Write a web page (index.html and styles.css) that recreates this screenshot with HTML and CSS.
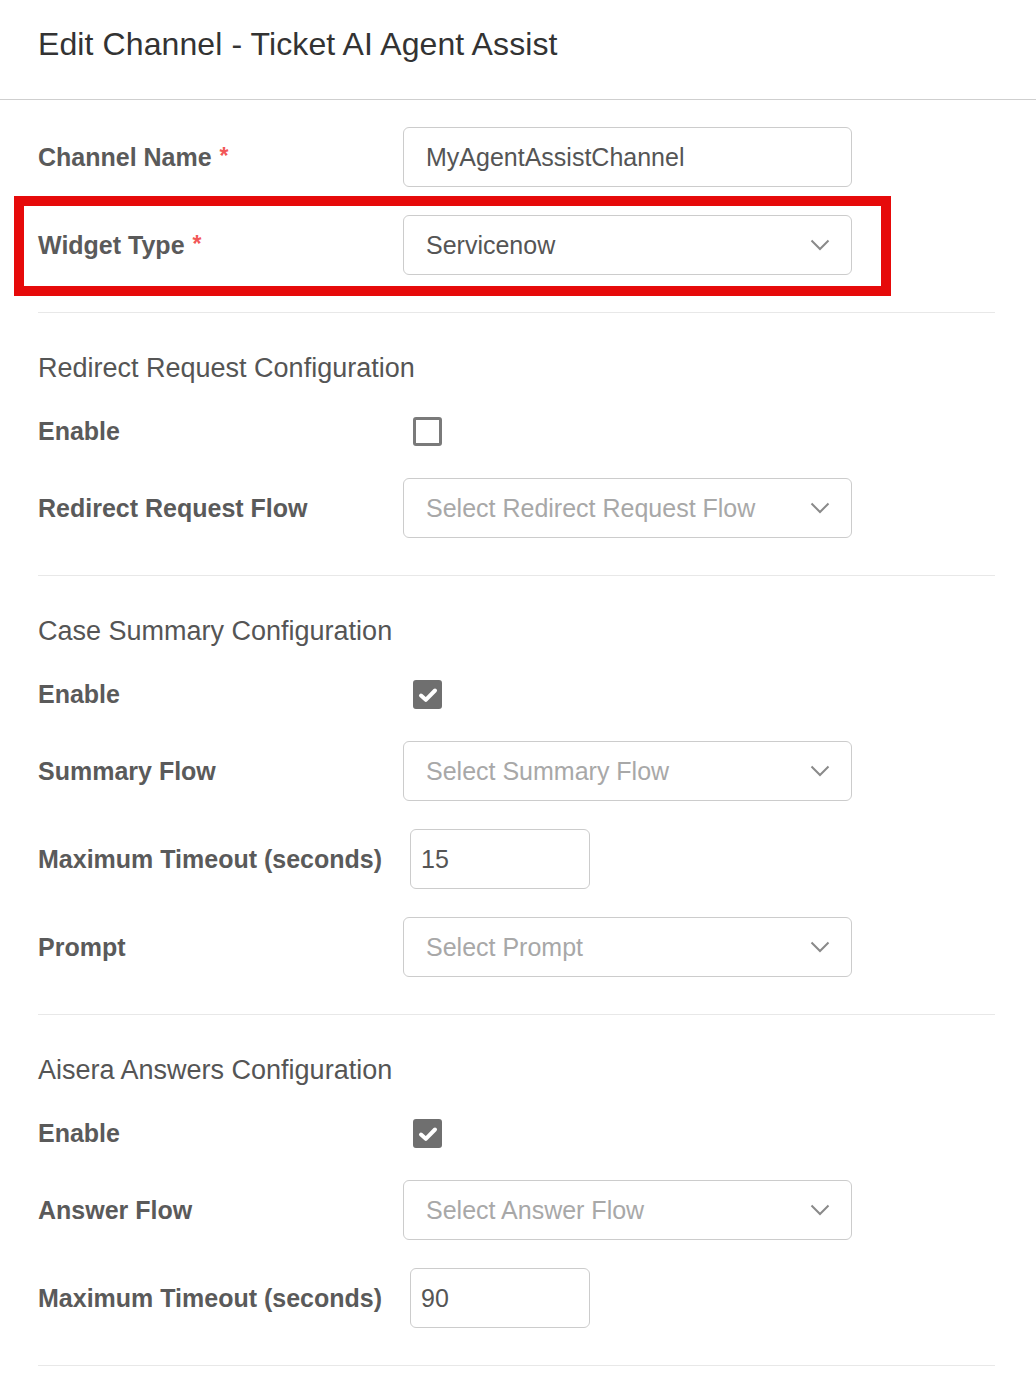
FILE: index.html
```html
<!DOCTYPE html>
<html lang="en">
<head>
<meta charset="utf-8">
<title>Edit Channel - Ticket AI Agent Assist</title>
<link rel="stylesheet" href="styles.css">
</head>
<body>
<header class="page-header">
  <h1 class="page-title">Edit Channel - Ticket AI Agent Assist</h1>
</header>
<main class="form">
  <section class="section section-first">
    <div class="row">
      <label class="label">Channel Name <span class="req">*</span></label>
      <div class="field">MyAgentAssistChannel</div>
    </div>
    <div class="row row-highlight">
      <label class="label">Widget Type <span class="req">*</span></label>
      <div class="field select">
        <span>Servicenow</span>
        <svg class="chev" width="20" height="12" viewBox="0 0 20 12"><path d="M1.5 1.5 L10 10 L18.5 1.5" fill="none" stroke="#8a8a8a" stroke-width="2"/></svg>
      </div>
      <div class="highlight"></div>
    </div>
  </section>

  <section class="section">
    <h2 class="section-title">Redirect Request Configuration</h2>
    <div class="row row-check">
      <label class="label">Enable</label>
      <span class="checkbox"></span>
    </div>
    <div class="row">
      <label class="label">Redirect Request Flow</label>
      <div class="field select placeholder">
        <span>Select Redirect Request Flow</span>
        <svg class="chev" width="20" height="12" viewBox="0 0 20 12"><path d="M1.5 1.5 L10 10 L18.5 1.5" fill="none" stroke="#8a8a8a" stroke-width="2"/></svg>
      </div>
    </div>
  </section>

  <section class="section">
    <h2 class="section-title">Case Summary Configuration</h2>
    <div class="row row-check">
      <label class="label">Enable</label>
      <span class="checkbox checked"><svg width="20" height="16" viewBox="0 0 20 16"><path d="M3 8.5 L7.8 12.8 L17 3.5" fill="none" stroke="#fff" stroke-width="4" stroke-linecap="round" stroke-linejoin="round"/></svg></span>
    </div>
    <div class="row">
      <label class="label">Summary Flow</label>
      <div class="field select placeholder">
        <span>Select Summary Flow</span>
        <svg class="chev" width="20" height="12" viewBox="0 0 20 12"><path d="M1.5 1.5 L10 10 L18.5 1.5" fill="none" stroke="#8a8a8a" stroke-width="2"/></svg>
      </div>
    </div>
    <div class="row">
      <label class="label">Maximum Timeout (seconds)</label>
      <div class="field number">15</div>
    </div>
    <div class="row">
      <label class="label">Prompt</label>
      <div class="field select placeholder">
        <span>Select Prompt</span>
        <svg class="chev" width="20" height="12" viewBox="0 0 20 12"><path d="M1.5 1.5 L10 10 L18.5 1.5" fill="none" stroke="#8a8a8a" stroke-width="2"/></svg>
      </div>
    </div>
  </section>

  <section class="section">
    <h2 class="section-title">Aisera Answers Configuration</h2>
    <div class="row row-check">
      <label class="label">Enable</label>
      <span class="checkbox checked"><svg width="20" height="16" viewBox="0 0 20 16"><path d="M3 8.5 L7.8 12.8 L17 3.5" fill="none" stroke="#fff" stroke-width="4" stroke-linecap="round" stroke-linejoin="round"/></svg></span>
    </div>
    <div class="row">
      <label class="label">Answer Flow</label>
      <div class="field select placeholder">
        <span>Select Answer Flow</span>
        <svg class="chev" width="20" height="12" viewBox="0 0 20 12"><path d="M1.5 1.5 L10 10 L18.5 1.5" fill="none" stroke="#8a8a8a" stroke-width="2"/></svg>
      </div>
    </div>
    <div class="row">
      <label class="label">Maximum Timeout (seconds)</label>
      <div class="field number">90</div>
    </div>
  </section>
</main>
</body>
</html>
```

FILE: styles.css
```css
* { box-sizing: border-box; }

html, body {
  margin: 0;
  padding: 0;
  background: #fff;
  font-family: "Liberation Sans", Arial, Helvetica, sans-serif;
  color: #555;
}

.page-header {
  height: 100px;
  border-bottom: 1px solid #cfcfcf;
  padding: 26px 38px 0;
}

.page-title {
  margin: 0;
  font-size: 32px;
  line-height: 36px;
  font-weight: 400;
  color: #333;
  letter-spacing: 0.1px;
}

.form {
  padding: 0 41px 0 38px;
}

.section {
  padding: 37px 0;
  border-bottom: 1px solid #e8e8e8;
  display: flex;
  flex-direction: column;
  gap: 28px;
}

.section-first {
  padding-top: 27px;
}

.section-title {
  margin: 0 0 -1px;
  font-size: 27px;
  line-height: 36px;
  font-weight: 400;
  color: #555;
}

.row {
  display: flex;
  align-items: center;
  height: 60px;
}

.row-check {
  height: 37px;
}

.row-highlight {
  position: relative;
}

.label {
  flex: 0 0 auto;
  min-width: 365px;
  padding-right: 28px;
  font-size: 25px;
  font-weight: 700;
  color: #5a5a5a;
  white-space: nowrap;
}

.req {
  color: #f25757;
  font-size: 23px;
  vertical-align: 2px;
  margin-left: 1px;
}

.field {
  width: 449px;
  height: 60px;
  border: 1px solid #cccccc;
  border-radius: 6px;
  padding: 0 21px 0 22px;
  display: flex;
  align-items: center;
  font-size: 25px;
  color: #555;
}

.select {
  justify-content: space-between;
}

.placeholder {
  color: #a8a8a8;
}

.chev {
  flex: 0 0 auto;
}

.number {
  width: 180px;
  padding-left: 10px;
}

.checkbox {
  margin-left: 10px;
  width: 29px;
  height: 29px;
  border: 3px solid #7a7a7a;
  border-radius: 3px;
  display: flex;
  align-items: center;
  justify-content: center;
}

.checkbox.checked {
  background: #6f6f6f;
  border-color: #6f6f6f;
}

.highlight {
  position: absolute;
  left: -24px;
  top: -19px;
  width: 877px;
  height: 100px;
  border: 10px solid #e60a0a;
  pointer-events: none;
}
```
